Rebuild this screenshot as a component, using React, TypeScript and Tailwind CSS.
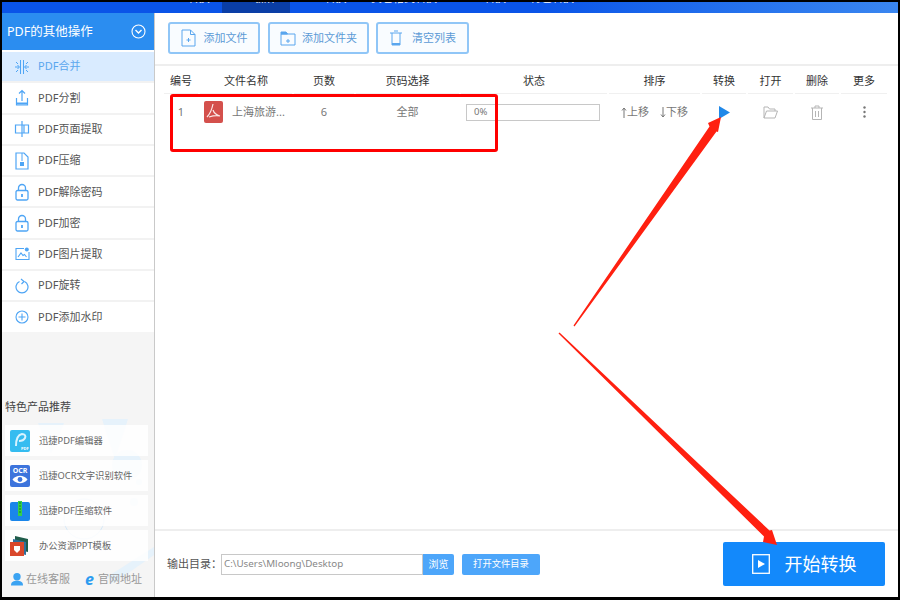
import React from "react"

const blue = "#4ea5f5"

const MergeIcon = () => (
	<svg width="16" height="16" viewBox="0 0 16 16" fill="none" stroke={blue} strokeWidth="1">
		<path d="M6.5 1v14M9.5 1v14M1 8h4M3.5 6l2 2-2 2M15 8h-4M12.5 6l-2 2 2 2M2 3l2 2M14 3l-2 2M2 13l2-2M14 13l-2-2" />
	</svg>
)
const SplitIcon = () => (
	<svg width="16" height="18" viewBox="0 0 16 18" fill="none" stroke={blue} strokeWidth="1.2">
		<path d="M2.5 9v7h11V9M8 12V2M5 4.5 8 1.500l3 3" />
		<path d="M2.500 14.500h11" strokeWidth="2" />
	</svg>
)
const ExtractIcon = () => (
	<svg width="16" height="18" viewBox="0 0 16 18" fill="none" stroke={blue} strokeWidth="1.2">
		<path d="M8 1v16M6 5H1.500v8H6M10 5h4.500v8H10M6 5h4v8H6" />
	</svg>
)
const ZipDocIcon = () => (
	<svg width="14" height="18" viewBox="0 0 14 18" fill="none" stroke={blue} strokeWidth="1.2">
		<path d="M1 1h8l4 4v12H1z" />
		<path d="M6 2h2M6 4h2M6 6h2M6 8h2" />
		<rect x="5" y="10" width="4" height="4" fill={blue} stroke="none" />
	</svg>
)
const LockIcon = () => (
	<svg width="14" height="18" viewBox="0 0 14 18" fill="none" stroke={blue} strokeWidth="1.300">
		<path d="M3.500 7.500V5a3.500 3.500 0 0 1 7 0v2.500" />
		<rect x="1" y="7.500" width="12" height="9.500" rx="1.500" />
		<path d="M7 11v3" strokeWidth="1.800" />
	</svg>
)
const PictureIcon = () => (
	<svg width="15" height="14" viewBox="0 0 15 14" fill="none" stroke={blue} strokeWidth="1.100">
		<path d="M9 1.500H1v11h13V5" />
		<path d="m3 10 3-4 2 2.500 1.500-1 2 2.500" />
		<circle cx="11.800" cy="2.500" r="2" fill={blue} stroke="none" />
	</svg>
)
const RotateIcon = () => (
	<svg width="14" height="16" viewBox="0 0 14 16" fill="none" stroke={blue} strokeWidth="1.200">
		<path d="M4.500 3.500a6 6 0 1 0 5 0" />
		<path d="M6 1 9 3.500 6.500 6" />
	</svg>
)
const PlusCircleIcon = () => (
	<svg width="14" height="14" viewBox="0 0 14 14" fill="none" stroke={blue} strokeWidth="1.100">
		<circle cx="7" cy="7" r="6" />
		<path d="M7 3.500v7M3.500 7h7" />
	</svg>
)

const sideItems = [
	{ label: "PDF合并", icon: <MergeIcon /> },
	{ label: "PDF分割", icon: <SplitIcon /> },
	{ label: "PDF页面提取", icon: <ExtractIcon /> },
	{ label: "PDF压缩", icon: <ZipDocIcon /> },
	{ label: "PDF解除密码", icon: <LockIcon /> },
	{ label: "PDF加密", icon: <LockIcon /> },
	{ label: "PDF图片提取", icon: <PictureIcon /> },
	{ label: "PDF旋转", icon: <RotateIcon /> },
	{ label: "PDF添加水印", icon: <PlusCircleIcon /> },
]

const PdfEditorLogo = () => (
	<svg width="20" height="22" viewBox="0 0 20 22">
		<rect width="20" height="22" rx="2" fill="#35bcf0" />
		<path d="M6 16c0-6 1-11 6-12 3 0 4 2 3 4s-3 3-6 3" fill="none" stroke="#d8f3ff" strokeWidth="2" />
		<text x="11" y="20" fontSize="4" fontWeight="700" fill="#fff">PDF</text>
	</svg>
)
const OcrLogo = () => (
	<svg width="20" height="22" viewBox="0 0 20 22">
		<rect width="20" height="22" rx="2" fill="#3d74dc" />
		<text x="10" y="8" fontSize="7" fontWeight="700" fill="#fff" textAnchor="middle">OCR</text>
		<path d="M2.500 14.500c4-5 11-5 15 0-4 5-11 5-15 0z" fill="#fff" />
		<circle cx="10" cy="14.500" r="2.400" fill="#3d74dc" />
	</svg>
)
const ZipLogo = () => (
	<svg width="20" height="20" viewBox="0 0 20 20">
		<path d="M0 3a2 2 0 0 1 2-2h16a2 2 0 0 1 2 2v15a2 2 0 0 1-2 2H2a2 2 0 0 1-2-2z" fill="#1a86ea" />
		<rect x="8" y="0" width="4" height="15" fill="#35d04a" />
		<path d="M9 2h2M9 5h2M9 8h2M9 11h2" stroke="#0e7f28" strokeWidth="1" />
	</svg>
)
const PptLogo = () => (
	<svg width="20" height="22" viewBox="0 0 20 22">
		<path d="M5 1l13 3v13l-13-3z" fill="#1f5c4a" />
		<path d="M3 4l13 3v13L3 17z" fill="#2f6f9c" />
		<rect x="0" y="7" width="14" height="14" fill="#d9472b" />
		<path d="M4 11h6v4l-3 3-3-3z" fill="#fff" />
	</svg>
)

const SortArrow = ({ down }: { down?: boolean }) => (
	<svg width="6" height="11" viewBox="0 0 6 11" fill="none" stroke="#777" strokeWidth="1">
		{down ? <path d="M3 0v10M1 7.500 3 10l2-2.500" /> : <path d="M3 11V1M1 3.500 3 1l2 2.500" />}
	</svg>
)

const promos = [
	{ label: "迅捷PDF编辑器", logo: <PdfEditorLogo /> },
	{ label: "迅捷OCR文字识别软件", logo: <OcrLogo /> },
	{ label: "迅捷PDF压缩软件", logo: <ZipLogo /> },
	{ label: "办公资源PPT模板", logo: <PptLogo /> },
]

const tabs = [
	{ label: "PDF转换", w: "w-[67px]" },
	{ label: "PDF操作", w: "w-[68px]", active: true },
	{ label: "WPS转换", w: "w-[68px]" },
	{ label: "其它格式转换", w: "w-[92px]" },
	{ label: "CAD转换", w: "w-[68px]" },
	{ label: "特色转换", w: "w-[68px]" },
]

const columns = ["编号", "文件名称", "页数", "页码选择", "状态", "排序", "转换", "打开", "删除", "更多"]

const toolBtn =
	"flex h-[32px] items-center justify-center rounded-[3px] border-2 border-[#90c6f7] bg-[#f9fcff] text-[11px] text-[#5b9ad6]"

const App = () => {
	return (
		<div className="relative flex h-[600px] w-[900px] flex-col overflow-hidden bg-black pb-[3px] pl-[2px] pr-[2px] pt-[2px] font-['Noto_Sans','Noto_Sans_CJK_SC',sans-serif]">
			{/* top tab bar, cut off by the crop of the screenshot */}
			<div className="flex h-[11px] shrink-0 overflow-hidden bg-gradient-to-r from-[#0a54e8] from-60% to-[#3a86f0] pl-[153px]">
				{tabs.map((t) => (
					<div
						key={t.label}
						className={`flex h-[11px] shrink-0 justify-center ${t.w} ${t.active ? "bg-[#0a3ea6]" : ""}`}
					>
						<span className="-mt-[12px] text-[11px] leading-[16px] text-white">{t.label}</span>
					</div>
				))}
			</div>

			<div className="flex min-h-0 flex-1 bg-white">
				{/* sidebar */}
				<div className="relative flex w-[153px] shrink-0 flex-col border-r border-[#c9c9c9] bg-[#f5f5f5]">
					<div className="flex h-[37px] shrink-0 items-center justify-between bg-[#2b8df0] pb-[1px] pl-[5px] pr-[8px] text-[12.500px] text-white">
						<span className="pt-[3px]">PDF的其他操作</span>
						<svg width="15" height="15" viewBox="0 0 15 15" fill="none" stroke="#fff" strokeWidth="1.100">
							<circle cx="7.500" cy="7.500" r="6.500" />
							<path d="m4.500 6 3 3 3-3" strokeWidth="1.400" />
						</svg>
					</div>
					<div className="flex shrink-0 flex-col">
						{sideItems.map((item, i) => (
							<div
								key={item.label}
								className={`flex h-[31.300px] items-center border-t-2 text-[11px] ${
									i === 0 ? "border-white bg-[#d9ebff] text-[#5aa6ee]" : "border-[#f2f2f2] bg-white text-[#555]"
								}`}
							>
								<span className="flex w-[36px] shrink-0 justify-center pl-[4px]">{item.icon}</span>
								{item.label}
							</div>
						))}
					</div>

					<div className="relative flex min-h-0 flex-1 flex-col justify-end px-[3px]">
						<svg className="absolute bottom-0 left-0" width="152" height="190" viewBox="0 0 152 190" fill="#e6f2fb">
							<path d="M36 16l26 0-13 30zM100 12l26 0-13 40z" />
							<circle cx="125" cy="58" r="15" />
							<circle cx="137" cy="75" r="3" />
							<circle cx="132" cy="95" r="4" />
							<circle cx="82" cy="112" r="20" fill="none" stroke="#d6e9f8" />
							<path d="M105 170l47-30v8l-40 28z" />
						</svg>
						<div className="relative mb-[10px] text-[11px] text-[#444]">特色产品推荐</div>
						<div className="relative flex flex-col gap-[4px]">
							{promos.map((p) => (
								<div key={p.label} className="flex h-[31px] w-[143px] items-center bg-white/85 pl-[5px]">
									<span className="flex w-[20px] shrink-0 justify-center">{p.logo}</span>
									<span className="ml-[9px] whitespace-nowrap text-[9.300px] text-[#666]">{p.label}</span>
								</div>
							))}
						</div>
						<div className="relative flex h-[36px] items-center pl-[6px] text-[11px] text-[#999]">
							<svg width="12" height="14" viewBox="0 0 13 14" fill="#3ba3f2">
								<circle cx="6.500" cy="4.500" r="4" />
								<path d="M0 14c0-4 3-5 6.500-5s6.500 1 6.500 5z" />
							</svg>
							<span className="ml-[3px]">在线客服</span>
							<span className="ml-[14px] w-[11px] text-center text-[16px] font-bold italic leading-none text-[#2c9cf0]">e</span>
							<span className="ml-[3px]">官网地址</span>
						</div>
					</div>
				</div>

				{/* main panel */}
				<div className="flex min-w-0 flex-1 flex-col">
					<div className="flex h-[53px] shrink-0 items-center border-b-2 border-[#eeeeee] pb-[1px] pl-[13px]">
						<button className={`${toolBtn} w-[92px]`}>
							<svg width="15" height="18" viewBox="0 0 15 18" fill="none" stroke="#5aa6ee" strokeWidth="1">
								<path d="M1 1h8.500L14 5.500V17H1zM9.500 1v4.500H14M7.500 9v4M5.500 11h4" />
							</svg>
							<span className="ml-[8px]">添加文件</span>
						</button>
						<button className={`${toolBtn} ml-[8px] w-[101px]`}>
							<svg width="16" height="15" viewBox="0 0 16 15" fill="none" stroke="#5aa6ee" strokeWidth="1">
								<path d="M1 3h14v11H1zM8 8v4M6 10h4" />
								<path d="M1 1h5l1.500 2H1z" fill="#5aa6ee" />
							</svg>
							<span className="ml-[6px]">添加文件夹</span>
						</button>
						<button className={`${toolBtn} ml-[7px] w-[93px]`}>
							<svg width="14" height="16" viewBox="0 0 14 16" fill="none" stroke="#5aa6ee" strokeWidth="1">
								<path d="M1 3h12M5 1h4M3 3v12h8V3" />
								<path d="M3 14h8" strokeWidth="2" />
							</svg>
							<span className="ml-[9px]">清空列表</span>
						</button>
					</div>

					<div className="pl-[8px] pr-[10px]">
						<div className="grid grid-cols-[36px_94px_62px_105px_148px_93px_46px_47px_46px_48px]">
							{columns.map((c) => (
								<div
									key={c}
									className="mx-[1px] flex h-[28px] items-center justify-center border-b border-[#f0f0f0] pt-[3px] text-[11px] text-[#333]"
								>
									{c}
								</div>
							))}
						</div>
						<div className="grid h-[36px] grid-cols-[36px_94px_62px_105px_148px_93px_46px_47px_46px_48px] items-center text-[11px] text-[#777]">
							<div className="text-center">1</div>
							<div className="flex items-center pl-[5px]">
								<svg width="19" height="22" viewBox="0 0 19 22" className="shrink-0">
									<rect width="19" height="22" rx="2" fill="#d4504c" />
									<path d="M9 3c-1 5-3 10-6 13M9 9c1 3 3 5 7 6-4-1-8 0-11 1" fill="none" stroke="#fbe9e8" strokeWidth="1.200" />
								</svg>
								<span className="ml-[9px] whitespace-nowrap">上海旅游...</span>
							</div>
							<div className="text-center">6</div>
							<div className="text-center">全部</div>
							<div className="pl-[6px]">
								<div className="flex h-[17px] w-[134px] items-center border border-[#c8c8c8] pl-[7px] text-[9.500px]">0%</div>
							</div>
							<div className="flex items-center justify-center gap-[11px] text-[11px]">
								<span className="flex items-center whitespace-nowrap">
									<SortArrow />上移
								</span>
								<span className="flex items-center whitespace-nowrap">
									<SortArrow down />下移
								</span>
							</div>
							<div className="flex justify-center">
								<svg width="11" height="13" viewBox="0 0 11 13" fill="#2088e8">
									<path d="M0 0l11 6.500L0 13z" />
								</svg>
							</div>
							<div className="flex justify-center">
								<svg width="15" height="13" viewBox="0 0 15 13" fill="none" stroke="#b5b5b5" strokeWidth="1">
									<path d="M1 12V1h4l1.500 2H12v2M1 12l2.500-7H14.500L12 12z" />
								</svg>
							</div>
							<div className="flex justify-center">
								<svg width="12" height="15" viewBox="0 0 12 15" fill="none" stroke="#b5b5b5" strokeWidth="1">
									<path d="M0 3h12M4 3V1h4v2M1.500 3v11.500h9V3M4.500 6v6M7.500 6v6" />
								</svg>
							</div>
							<div className="flex justify-center">
								<svg width="3" height="12" viewBox="0 0 3 12" fill="#777">
									<circle cx="1.500" cy="1.500" r="1.200" />
									<circle cx="1.500" cy="6" r="1.200" />
									<circle cx="1.500" cy="10.500" r="1.200" />
								</svg>
							</div>
						</div>
					</div>

					<div className="flex-1" />

					<div className="flex h-[68px] shrink-0 items-center border-t-2 border-[#eeeeee] pl-[12px] pr-[13px]">
						<span className="whitespace-nowrap text-[11px] text-[#555]">输出目录：</span>
						<div className="ml-[-1px] flex h-[21px] w-[202px] items-center border border-[#c8c8c8] pl-[2px] text-[9.800px] text-[#888]">
							C:\Users\Mloong\Desktop
						</div>
						<div className="flex h-[21px] w-[31px] items-center justify-center rounded-r-[2px] bg-[#4da6fa] text-[10px] text-white">
							浏览
						</div>
						<div className="ml-[8px] flex h-[21px] w-[78px] items-center justify-center rounded-[2px] bg-[#4da6fa] text-[9.300px] text-white">
							打开文件目录
						</div>
						<button className="ml-auto flex h-[44px] w-[162px] items-center justify-center rounded-[2px] bg-[#1389fb] text-[18px] text-white">
							<svg width="18" height="20" viewBox="0 0 18 20" fill="none" stroke="#fff" strokeWidth="1.300">
								<rect x="0.700" y="0.700" width="16.600" height="18.600" />
								<path d="M6 6l7 4-7 4z" fill="#fff" stroke="none" />
							</svg>
							<span className="ml-[15px]">开始转换</span>
						</button>
					</div>
				</div>
			</div>

			{/* annotations drawn on top of the screenshot */}
			<div className="absolute left-[170px] top-[94px] h-[58px] w-[328px] rounded-[3px] border-[3px] border-[#ff0000]" />
			<svg className="absolute left-0 top-0" width="900" height="600" viewBox="0 0 900 600" fill="#ff2010">
				<path d="M573.500 325.500 709.500 126.500 708 123 721 117 718 132 716.500 131.500 574.500 326.500z" />
				<path d="M559.500 332.500 769.500 530.500 772 530 777 545 763 542 764 536.500 558.500 333.500z" />
			</svg>
		</div>
	)
}

export default App
